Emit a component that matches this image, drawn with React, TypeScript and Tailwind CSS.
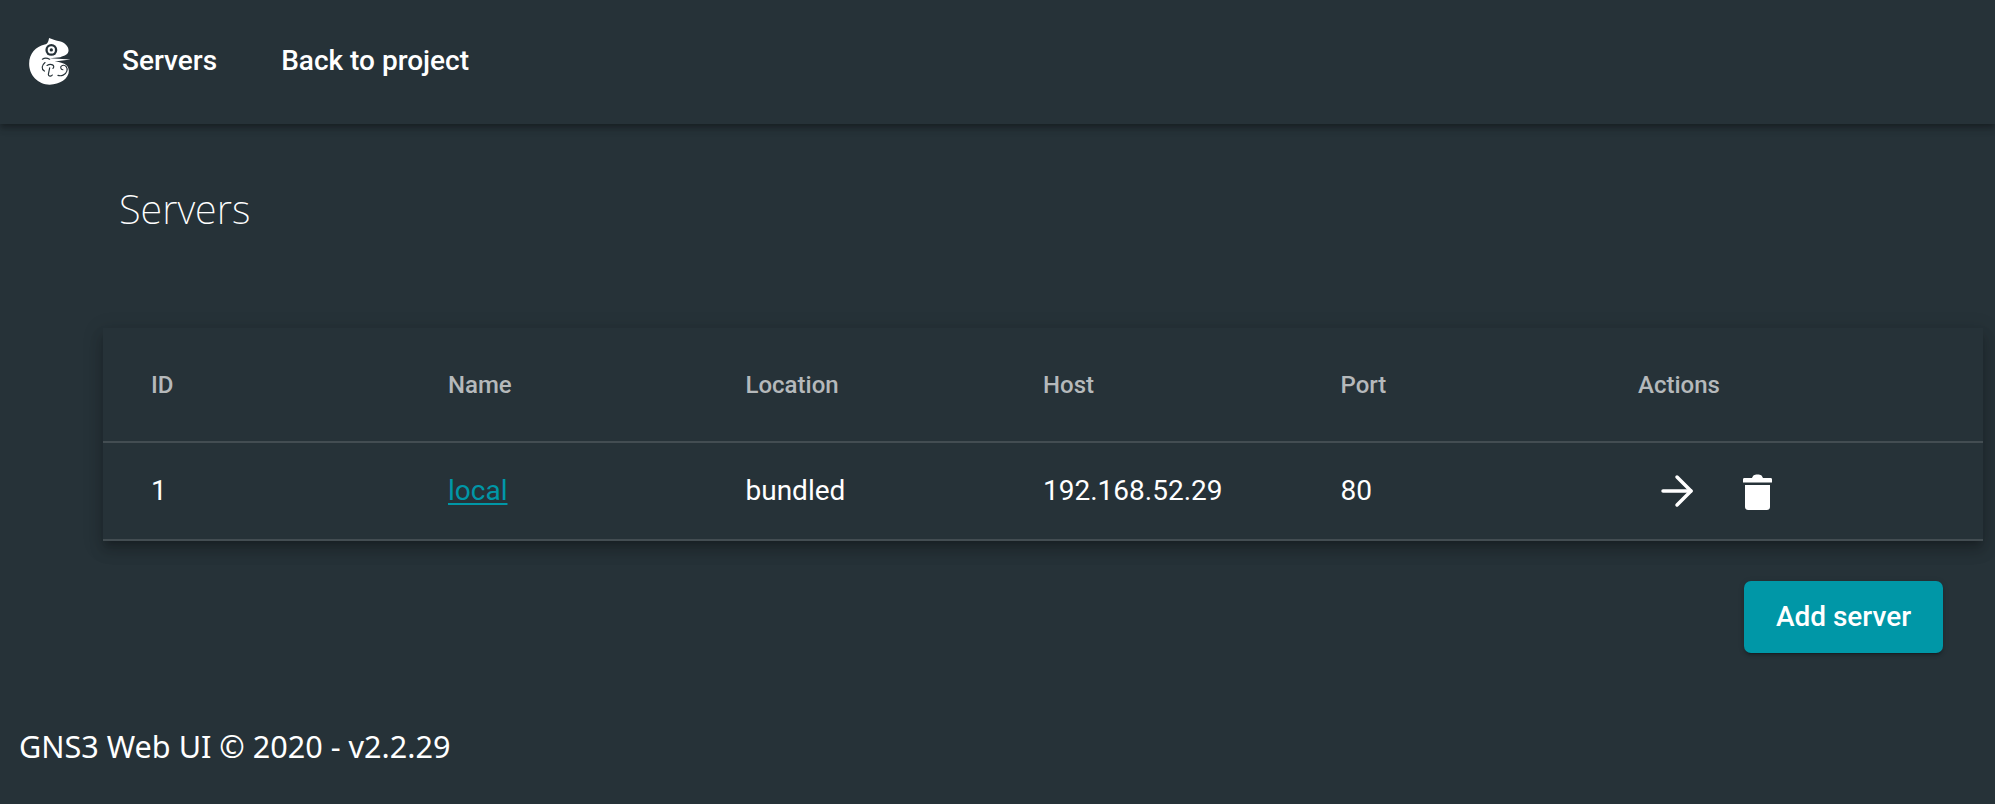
import { ArrowRight } from "lucide-react";

const columns = ["ID", "Name", "Location", "Host", "Port", "Actions"];

function Logo() {
  return (
    <svg viewBox="88 122 126 142" className="h-[47px] w-[42px]">
      {/* chameleon silhouette */}
      <path
        fill="#fff"
        d="M148 122 C160 126 170 130 180 132 C195 136 207 146 207 160 C207 172 195 176 182 180 L150 183 L213 187 L165 193 C185 195 208 200 208 222 C208 245 180 263 150 263 C115 263 88 235 88 200 C88 170 108 148 135 142 C145 140 147 130 148 122 Z"
      />
      <circle cx="155" cy="158" r="18" fill="#263238" />
      <circle cx="155" cy="158" r="11" fill="#fff" />
      <circle cx="155" cy="158" r="5" fill="#263238" />
      <path
        fill="none"
        stroke="#263238"
        strokeWidth="3.5"
        strokeLinecap="round"
        d="M128 186 C134 182 144 183 150 186 M136 196 C126 204 124 216 134 222 M142 205 C154 198 168 204 160 214 M150 212 L146 232 C146 238 155 239 158 234"
      />
      <path
        fill="none"
        stroke="#263238"
        strokeWidth="3.5"
        strokeLinecap="round"
        d="M190 218 C183 218 180 208 188 205 C198 202 205 212 202 222 C198 234 185 238 175 235"
      />
    </svg>
  );
}

function TrashIcon() {
  return (
    <svg viewBox="0 0 29 37" className="h-[37px] w-[29px]" fill="#fff">
      <path d="M0 6.500 C0 5.500 .5 5 1.500 5 H9 C10 2.500 11 1.500 14.500 1.500 C18 1.500 19 2.500 20 5 H27.500 C28.500 5 29 5.500 29 6.500 V9.500 H0 Z" />
      <path d="M2 12 H27 V34 C27 36 25.500 37 24 37 H5 C3.500 37 2 36 2 34 Z" />
    </svg>
  );
}

export default function App() {
  return (
    <div className="h-[804px] overflow-hidden bg-[#263238] font-['Roboto',sans-serif] text-white">
      <header className="relative flex h-[124px] items-center bg-[#263238] shadow-[0_3px_5px_-1px_rgba(0,0,0,0.2),0_5px_6px_0_rgba(0,0,0,0.14),0_1px_13px_0_rgba(0,0,0,0.12)]">
        <div className="mb-[2px] ml-[29px] mr-[51px] flex">
          <Logo />
        </div>
        <nav className="flex items-center gap-[64px] pb-[3px] text-[28px] font-medium">
          <a>Servers</a>
          <a>Back to project</a>
        </nav>
      </header>

      <main className="pl-[103px] pr-[12px]">
        <h1 className="pl-[16px] pt-[61px] font-['Noto_Sans',sans-serif] text-[39.7px] leading-[48px] font-extralight">
          Servers
        </h1>

        <table className="mt-[95px] w-full table-fixed bg-[#263238] text-left shadow-[0_6px_6px_-4px_rgba(0,0,0,0.2),0_10px_13px_1px_rgba(0,0,0,0.14),0_4px_18px_3px_rgba(0,0,0,0.12)]">
          <thead>
            <tr className="h-[114px] border-b-2 border-[#434d52]">
              {columns.map((col, i) => (
                <th
                  key={col}
                  className={`${i === 0 ? "w-[345px] pl-[48px]" : i < 5 ? "w-[297.5px]" : ""} text-[24px] font-medium text-[#b5b9bb]`}
                >
                  {col}
                </th>
              ))}
            </tr>
          </thead>
          <tbody>
            <tr className="h-[98px] border-b-2 border-[#434d52] text-[28px]">
              <td className="pl-[48px]">1</td>
              <td>
                <a className="text-[#0097a7] underline underline-offset-[3px]">local</a>
              </td>
              <td>bundled</td>
              <td>192.168.52.29</td>
              <td>80</td>
              <td>
                <div className="flex items-center gap-[42px] pl-[15px]">
                  <ArrowRight size={48} strokeWidth={3.5} absoluteStrokeWidth />
                  <TrashIcon />
                </div>
              </td>
            </tr>
          </tbody>
        </table>

        <div className="mt-[40px] flex justify-end pr-[40px]">
          <button className="h-[72px] w-[199px] rounded-[7px] bg-[#0097a7] text-[28px] font-medium shadow-[0_4px_1px_-3px_rgba(0,0,0,0.2),0_3px_3px_0_rgba(0,0,0,0.14),0_1px_6px_0_rgba(0,0,0,0.12)]">
            Add server
          </button>
        </div>
      </main>

      <footer className="mt-[73px] pl-[19px] font-['Noto_Sans',sans-serif] text-[30.6px] leading-[40px]">
        GNS3 Web UI © 2020 - v2.2.29
      </footer>
    </div>
  );
}
